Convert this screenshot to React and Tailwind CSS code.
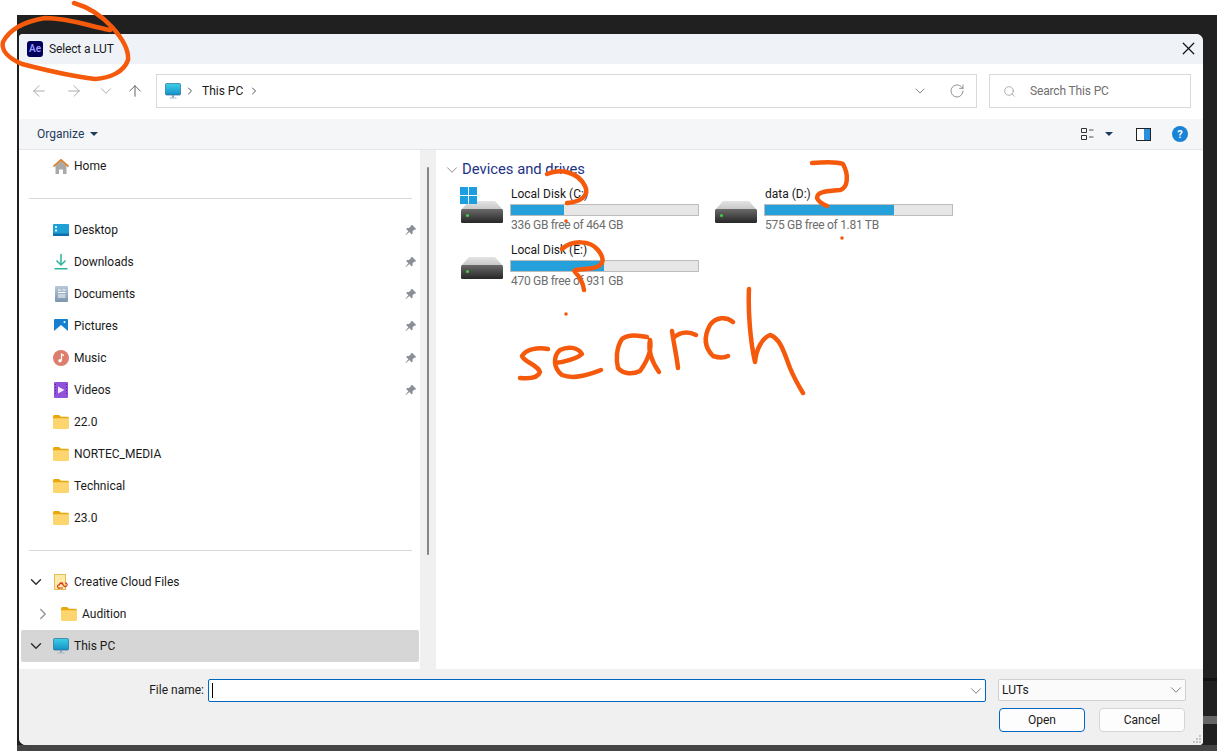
import { ArrowLeft, ArrowRight, ArrowUp, ChevronDown, ChevronRight, RotateCw, Search, X } from 'lucide-react';

const FONT = "font-['Roboto','Noto_Sans',sans-serif]";

const PinIcon = () => (
  <svg width="12" height="12" viewBox="0 0 12 12" className="shrink-0">
    <path d="M7 .8l4.2 4.2-1 .7-.7-.2-2 2 .1 2-.9.9-2.3-2.3L1 11l-.4-.4 2.800-3.400L1.100 4.900l.9-.9 2 .1 2-2-.2-.7z" fill="#8b9098" />
  </svg>
);

const FolderIcon = () => (
  <svg width="16" height="14" viewBox="0 0 16 14">
    <path d="M0 1.500Q0 0 1.500 0H6l2 1.800h6.500Q16 1.800 16 3.300V4H0z" fill="#e8a80c" />
    <path d="M0 3.200h16v9.300q0 1.500-1.500 1.500h-13Q0 14 0 12.500z" fill="#fcd56e" />
  </svg>
);

const PcIcon = () => (
  <svg width="16" height="16" viewBox="0 0 16 16">
    <defs>
      <linearGradient id="pc" x1="0" y1="0" x2="0" y2="1">
        <stop offset="0" stopColor="#3fd0e8" />
        <stop offset="1" stopColor="#1390c8" />
      </linearGradient>
    </defs>
    <rect x="0.500" y="0.500" width="15" height="11.500" rx="1" fill="url(#pc)" stroke="#2a6f96" strokeWidth="0.700" />
    <rect x="7" y="12" width="2" height="2.500" fill="#8aa0ad" />
    <rect x="4.500" y="14.500" width="7" height="1" fill="#a9b6bf" />
  </svg>
);

const DesktopIcon = () => (
  <svg width="16" height="12" viewBox="0 0 16 12">
    <rect width="16" height="12" rx="1" fill="#1ea0d6" />
    <rect y="9.500" width="16" height="2.500" fill="#0f6ea8" />
    <rect x="2" y="2" width="2" height="2" fill="#d8f1fb" />
    <rect x="2" y="5.500" width="2" height="2" fill="#d8f1fb" />
  </svg>
);

const HomeIcon = () => (
  <svg width="16" height="15" viewBox="0 0 16 15">
    <path d="M2.500 7L8 1.800 13.500 7v8h-3.500v-4.500H6V15H2.500z" fill="#a9a9a9" />
    <path d="M0.500 7.500L8 0.800l7.500 6.700" fill="none" stroke="#d9822b" strokeWidth="1.700" />
  </svg>
);

const DownloadIcon = () => (
  <svg width="14" height="16" viewBox="0 0 14 16">
    <path d="M7 0v10.500M2.500 6.500L7 11l4.500-4.500" fill="none" stroke="#2bb59a" strokeWidth="1.500" />
    <rect x="0.500" y="14" width="13" height="1.500" fill="#2bb59a" />
  </svg>
);

const DocumentIcon = () => (
  <svg width="13" height="16" viewBox="0 0 13 16">
    <defs>
      <linearGradient id="doc" x1="0" y1="0" x2="0" y2="1">
        <stop offset="0" stopColor="#b9c8d8" />
        <stop offset="1" stopColor="#7e95ad" />
      </linearGradient>
    </defs>
    <rect width="13" height="16" rx="1" fill="url(#doc)" />
    <path d="M3 4h3M7.500 4H10.500M3 6.500h7.500M3 9h7.500M3 11h7.500" stroke="#fff" strokeWidth="1" />
  </svg>
);

const PicturesIcon = () => (
  <svg width="14" height="14" viewBox="0 0 14 14">
    <rect width="14" height="14" rx="1" fill="#1580d0" />
    <path d="M0 12L7 6l7 6v2H0z" fill="#fff" />
    <circle cx="10.500" cy="3" r="1" fill="#fff" />
  </svg>
);

const MusicIcon = () => (
  <svg width="16" height="16" viewBox="0 0 16 16">
    <circle cx="8" cy="8" r="8" fill="#dd7d6c" />
    <path d="M8.500 3.500v7" stroke="#fff" strokeWidth="1.200" />
    <circle cx="7" cy="10.700" r="1.700" fill="#fff" />
    <path d="M8.500 3.500l2.500 1.200v1.500L8.500 5z" fill="#fff" />
  </svg>
);

const VideosIcon = () => (
  <svg width="14" height="16" viewBox="0 0 14 16">
    <rect width="14" height="16" rx="1" fill="#8f52d8" />
    <path d="M4 4.500L10.500 8 4 11.500z" fill="#f3e9ff" />
    <path d="M1 2.500h1M1 5.500h1M1 8.500h1M1 11.500h1M12 2.500h1M12 5.500h1M12 8.500h1M12 11.500h1" stroke="#4a2390" strokeWidth="1.200" />
  </svg>
);

const CloudFilesIcon = () => (
  <svg width="14" height="16" viewBox="0 0 14 16">
    <rect x="0.500" y="0.500" width="11" height="15" fill="#fde9a8" stroke="#e4bd58" />
    <path d="M5 11.500a2 2 0 0 1 3.500-1.500l1.500 2a1.800 1.800 0 1 0 1-3M9 9.500a2 2 0 0 0-3.500 1l-1 .5a1.600 1.600 0 0 0 1.500 3h3" fill="none" stroke="#d93a1c" strokeWidth="1.200" />
  </svg>
);

const DriveIcon = () => (
  <svg width="42" height="22" viewBox="0 0 42 22">
    <defs>
      <linearGradient id="driveBody" x1="0" y1="0" x2="0" y2="1">
        <stop offset="0" stopColor="#6a6a6a" />
        <stop offset="1" stopColor="#262626" />
      </linearGradient>
      <linearGradient id="driveTop" x1="0" y1="0" x2="0" y2="1">
        <stop offset="0" stopColor="#e4e4e4" />
        <stop offset="1" stopColor="#c4c4c4" />
      </linearGradient>
    </defs>
    <path d="M8 0h26l8 9H0z" fill="url(#driveTop)" />
    <rect y="8" width="42" height="14" rx="1.500" fill="url(#driveBody)" />
    <rect x="5" y="13" width="3" height="3" rx="1.500" fill="#3fd13f" />
  </svg>
);

const WindowsIcon = () => (
  <svg width="17" height="17" viewBox="0 0 17 17">
    <path d="M0 0h8v8H0zM9 0h8v8H9zM0 9h8v8H0zM9 9h8v8H9z" fill="#1c9fe0" />
  </svg>
);

const AeIcon = () => (
  <div className="w-4 h-4 rounded-[3px] bg-[#00005b] flex items-center justify-center text-[10px] font-semibold leading-none text-[#9a9aff]">
    Ae
  </div>
);

const Caret = () => (
  <svg width="8" height="4" viewBox="0 0 8 4">
    <path d="M0 0h8L4 4z" fill="#1d3a5c" />
  </svg>
);

const ViewIcon = () => (
  <svg width="13" height="12" viewBox="0 0 13 12">
    <path d="M.5.500h5v4h-5zM.5 7.500h5v4h-5z" fill="none" stroke="#333" />
    <path d="M8 2h4.500M8 9h4.500" stroke="#555" />
  </svg>
);

const PreviewIcon = () => (
  <svg width="15" height="13" viewBox="0 0 15 13">
    <rect x="0.500" y="0.500" width="14" height="12" fill="#fff" stroke="#222" />
    <rect x="8" y="1" width="6" height="11" fill="#2a8fdc" />
  </svg>
);

const pinned = [
  { label: 'Desktop', icon: <DesktopIcon /> },
  { label: 'Downloads', icon: <DownloadIcon /> },
  { label: 'Documents', icon: <DocumentIcon /> },
  { label: 'Pictures', icon: <PicturesIcon /> },
  { label: 'Music', icon: <MusicIcon /> },
  { label: 'Videos', icon: <VideosIcon /> },
];

const folders = ['22.0', 'NORTEC_MEDIA', 'Technical', '23.0'];

const drives = [
  { name: 'Local Disk (C:)', free: '336 GB free of 464 GB', used: 53, system: true },
  { name: 'data (D:)', free: '575 GB free of 1.81 TB', used: 129 },
  { name: 'Local Disk (E:)', free: '470 GB free of 931 GB', used: 93 },
];

function NavRow({ icon, label, pin }) {
  return (
    <div className="h-8 flex items-center text-xs text-[#1a1a1a]">
      <div className="w-4 h-4 flex items-center justify-center shrink-0">{icon}</div>
      <span className="ml-[5px] flex-1">{label}</span>
      {pin && <PinIcon />}
    </div>
  );
}

function Drive({ drive }) {
  return (
    <div className="h-14 flex relative">
      {drive.system && (
        <div className="absolute left-0 top-[1px]">
          <WindowsIcon />
        </div>
      )}
      <div className="w-[50px] pl-[1px] pt-[15px] shrink-0">
        <DriveIcon />
      </div>
      <div className="w-[189px] text-xs">
        <div className="h-[18px] leading-[16px] pl-[1px] text-[#1a1a1a]">{drive.name}</div>
        <div className="h-3 bg-[#e6e6e6] border border-[#bcbcbc]">
          <div className="h-full bg-[#26a0da]" style={{ width: drive.used }} />
        </div>
        <div className="mt-[1px] h-[18px] leading-[17px] pl-[1px] tracking-[-0.3px] text-[#6d6d6d]">{drive.free}</div>
      </div>
    </div>
  );
}

// marker scribbles from the screenshot, in page coordinates
const scribbles = [
  'M74 3 C88 7 100 14 112 27 C122 38 129 50 128 60 C124 72 110 78 95 79 C70 76 45 70 22 64 C8 58 1 50 3 42 C9 30 22 22 45 18 C70 18 88 26 110 30',
  'M547 174 C560 168 578 172 585 186 C590 196 580 202 567 203',
  'M812 163 C825 162 838 162 843 164 C849 175 848 188 840 190 C825 191 817 192 817 198 C819 203 825 205 827 206',
  'M562 249 C572 240 590 240 598 250 C606 260 603 266 593 268 C580 270 572 269 575 272 C580 277 583 282 584 290',
  'M548 349 C538 347 526 349 522 356 C524 362 538 365 540 372 C538 378 530 379 520 378',
  'M555 363 C565 362 578 358 582 354 C578 347 568 346 560 350 C553 356 553 368 562 375 C575 380 590 374 601 370',
  'M647 337 C638 335 628 334 622 339 C616 348 616 360 618 368 C624 375 634 374 640 371 C648 360 652 350 650 340 C648 350 652 362 659 372',
  'M672 331 C674 345 677 358 678 368 M673 338 C680 332 688 331 696 335',
  'M733 322 C726 316 716 317 710 325 C704 336 704 347 713 356 C719 358 724 358 728 356',
  'M749 289 C748 310 750 340 755 362 C756 350 762 338 770 335 C780 338 784 352 790 368 C795 380 800 388 803 393',
];

function Annotations() {
  return (
    <svg className="absolute inset-0 pointer-events-none" width="1217" height="751" viewBox="0 0 1217 751" fill="none">
      <g stroke="#f55a0c" strokeWidth="4.500" strokeLinecap="round" strokeLinejoin="round">
        {scribbles.map((d) => (
          <path key={d} d={d} />
        ))}
      </g>
      <g fill="#f55a0c">
        <circle cx="566" cy="221" r="1.800" />
        <circle cx="842" cy="238" r="1.800" />
        <circle cx="566" cy="314" r="1.800" />
      </g>
    </svg>
  );
}

export default function App() {
  return (
    <div className={`relative w-[1217px] h-[751px] overflow-hidden bg-white pt-[15px] pl-[17px] ${FONT}`}>
      <div className="relative h-full bg-[#202020] pt-[19px] pl-[2px] pr-[14px] pb-[6px]">
        {/* app window peeking out behind the dialog */}
        <div className="absolute left-0 right-0 bottom-0 h-[6px] bg-[#444444]" />
        <div className="absolute right-0 bottom-[27px] w-[14px] h-2 bg-[#666666]" />
        <div className="absolute right-0 bottom-[70px] w-[14px] h-[3px] bg-[#111111]" />

        <div className="relative h-full flex flex-col overflow-hidden rounded-tr-[7px] rounded-tl-[4px] rounded-bl-[7px] rounded-br-[4px] bg-white">
          {/* title bar */}
          <div className="h-[30px] shrink-0 bg-[#eff3f8] flex items-center pl-2 pr-[4px] text-xs text-[#1a1a1a]">
            <AeIcon />
            <span className="ml-[6px] flex-1 tracking-[-0.15px]">Select a LUT</span>
            <X size={21} strokeWidth={1.400} className="-mt-[2px] text-[#111]" />
          </div>

          {/* address row */}
          <div className="h-[55px] shrink-0 bg-white flex items-center pb-[1px]">
            <div className="w-[137px] shrink-0 flex items-center pl-[11px] text-[#a3a3a3]">
              <ArrowLeft size={18} strokeWidth={1.200} />
              <ArrowRight size={18} strokeWidth={1.200} className="ml-[17px]" />
              <ChevronDown size={18} strokeWidth={1.200} className="ml-[14px]" />
              <ArrowUp size={18} strokeWidth={1.200} className="ml-[11px] text-[#555]" />
            </div>
            <div className="w-[821px] h-[34px] shrink-0 border border-[#d9d9d9] flex items-center pl-[8px] pr-[11px] text-xs text-[#1a1a1a]">
              <PcIcon />
              <ChevronRight size={12} strokeWidth={2} className="ml-[3px] text-[#555]" />
              <span className="ml-[6px]">This PC</span>
              <ChevronRight size={12} strokeWidth={2} className="ml-[5px] text-[#555]" />
              <div className="flex-1" />
              <ChevronDown size={16} strokeWidth={1.200} className="text-[#666]" />
              <RotateCw size={16} strokeWidth={1.200} className="ml-[21px] text-[#777]" />
            </div>
            <div className="ml-3 w-[202px] h-[34px] shrink-0 border border-[#d9d9d9] flex items-center pl-[13px] text-xs text-[#6f6f6f]">
              <Search size={13} strokeWidth={1.200} className="text-[#8a8a8a]" />
              <span className="ml-[14px] tracking-[-0.15px]">Search This PC</span>
            </div>
          </div>

          {/* toolbar */}
          <div className="h-[31px] shrink-0 bg-[#f5f6f7] border-b border-[#e5e5e5] flex items-center pl-[18px] pr-[15px] text-xs text-[#1d3a5c]">
            <span>Organize</span>
            <div className="ml-[6px]">
              <Caret />
            </div>
            <div className="flex-1" />
            <ViewIcon />
            <div className="ml-[11px]">
              <Caret />
            </div>
            <div className="ml-[23px]">
              <PreviewIcon />
            </div>
            <div className="ml-[21px] w-4 h-4 rounded-full bg-[#1883d7] text-white text-[11px] font-bold leading-none flex items-center justify-center">
              ?
            </div>
          </div>

          {/* body */}
          <div className="flex-1 min-h-0 flex">
            <div className="w-[401px] shrink-0 pl-[2px] pr-[1px]">
              <div className="pl-[32px] pr-[2px]">
                <NavRow icon={<HomeIcon />} label="Home" />
              </div>
              <div className="mt-[16px] mb-[15px] ml-[8px] mr-[7px] h-px bg-[#d8d8d8]" />
              <div className="pl-[32px] pr-[2px]">
                {pinned.map((item) => (
                  <NavRow key={item.label} icon={item.icon} label={item.label} pin />
                ))}
                {folders.map((name) => (
                  <NavRow key={name} icon={<FolderIcon />} label={name} />
                ))}
              </div>
              <div className="mt-[16px] mb-[15px] ml-[8px] mr-[7px] h-px bg-[#d8d8d8]" />
              <div className="h-8 flex items-center pl-[6px] text-xs">
                <ChevronDown size={18} strokeWidth={2} className="text-[#333]" />
                <div className="ml-[8px] flex-1">
                  <NavRow icon={<CloudFilesIcon />} label="Creative Cloud Files" />
                </div>
              </div>
              <div className="h-8 flex items-center pl-[13px] text-xs">
                <ChevronRight size={18} strokeWidth={2} className="text-[#999]" />
                <div className="ml-[9px] flex-1">
                  <NavRow icon={<FolderIcon />} label="Audition" />
                </div>
              </div>
              <div className="h-8 flex items-center pl-[6px] bg-[#d6d6d6] rounded-[2px] text-xs">
                <ChevronDown size={18} strokeWidth={2} className="text-[#333]" />
                <div className="ml-[8px] flex-1">
                  <NavRow icon={<PcIcon />} label="This PC" />
                </div>
              </div>
            </div>

            {/* sidebar scrollbar */}
            <div className="w-4 shrink-0 bg-[#f0f0f0] flex justify-center pt-[17px]">
              <div className="w-[2px] h-[388px] rounded-full bg-[#858585]" />
            </div>

            {/* drives */}
            <div className="flex-1 pl-[7px] pt-[10px]">
              <div className="h-[19px] flex items-center text-[14.8px] text-[#1e3287]">
                <ChevronDown size={18} strokeWidth={1.100} className="text-[#777]" />
                <span className="ml-[1px]">Devices and drives</span>
              </div>
              <div className="mt-[7px] ml-[17px] grid grid-cols-[254px_254px]">
                {drives.map((drive) => (
                  <Drive key={drive.name} drive={drive} />
                ))}
              </div>
            </div>
          </div>

          {/* footer */}
          <div className="h-[76px] shrink-0 bg-[#f0f0f0] relative text-xs text-[#1a1a1a]">
            <div className="flex items-start pt-[10px]">
              <div className="w-[185px] h-[23px] leading-[23px] text-right shrink-0">File name:</div>
              <div className="ml-[4px] w-[778px] h-[23px] shrink-0 bg-white border border-[#0067c0] rounded-[2px] flex items-center pl-[3px]">
                <div className="w-px h-[15px] bg-black" />
                <div className="flex-1" />
                <ChevronDown size={18} strokeWidth={1} className="text-[#555]" />
              </div>
              <div className="ml-3 flex flex-col">
                <div className="w-[188px] h-[22px] bg-[#fbfbfb] border border-[#cfcfcf] rounded-[2px] flex items-center justify-between pl-[3px]">
                  <span>LUTs</span>
                  <ChevronDown size={18} strokeWidth={1} className="text-[#555]" />
                </div>
                <div className="mt-[7px] ml-[1px] flex gap-[14px]">
                  <button className="w-[86px] h-6 bg-[#fdfdfd] border border-[#0067c0] rounded-[4px]">Open</button>
                  <button className="w-[86px] h-6 bg-[#fdfdfd] border border-[#d5d5d5] rounded-[4px]">Cancel</button>
                </div>
              </div>
            </div>
            <svg width="10" height="10" viewBox="0 0 10 10" className="absolute right-[1px] bottom-[1px]">
              <path d="M7 1h2v2H7zM4 4h2v2H4zM7 4h2v2H7zM1 7h2v2H1zM4 7h2v2H4zM7 7h2v2H7z" fill="#c4c4c4" />
            </svg>
          </div>
        </div>
      </div>
      <Annotations />
    </div>
  );
}
